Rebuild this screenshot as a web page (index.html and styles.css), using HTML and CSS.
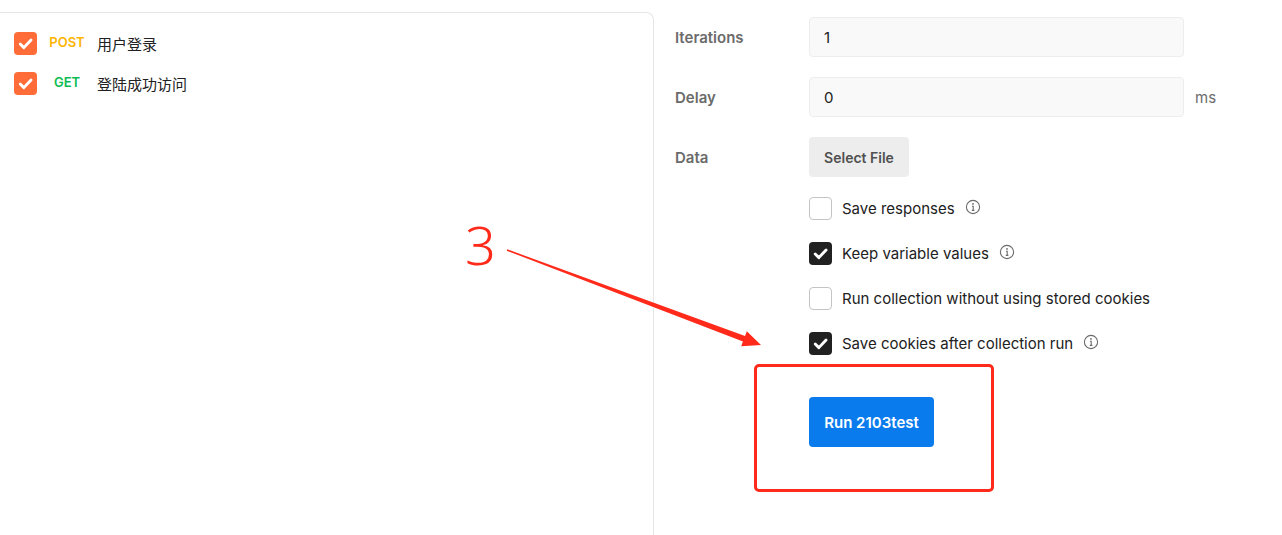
FILE: index.html
```html
<!DOCTYPE html>
<html>
<head>
<meta charset="utf-8">
<link rel="stylesheet" href="styles.css">
</head>
<body>
<div class="page">
  <div class="left">
    <div class="req">
      <span class="cb cb-orange"><svg viewBox="0 0 24 24"><path d="M6.5 12.5l3.8 3.8 7.5-8" /></svg></span>
      <span class="method post">POST</span>
      <span class="name">用户登录</span>
    </div>
    <div class="req">
      <span class="cb cb-orange"><svg viewBox="0 0 24 24"><path d="M6.5 12.5l3.8 3.8 7.5-8" /></svg></span>
      <span class="method get">GET</span>
      <span class="name">登陆成功访问</span>
    </div>
  </div>
  <div class="right">
    <div class="frow">
      <span class="label">Iterations</span>
      <div class="input">1</div>
    </div>
    <div class="frow">
      <span class="label">Delay</span>
      <div class="input">0</div>
      <span class="unit">ms</span>
    </div>
    <div class="frow">
      <span class="label">Data</span>
      <div class="filebtn">Select File</div>
    </div>
    <div class="opts">
      <div class="opt">
        <span class="cb cb-empty"></span>
        <span class="optlabel">Save responses</span>
        <svg class="info" viewBox="0 0 16 16"><circle cx="8" cy="8" r="6.6"/><circle class="dot" cx="8" cy="4.9" r="0.9"/><path d="M7 7.2h1.2v4.2M6.8 11.4h2.6"/></svg>
      </div>
      <div class="opt">
        <span class="cb cb-dark"><svg viewBox="0 0 24 24"><path d="M6.5 12.5l3.8 3.8 7.5-8" /></svg></span>
        <span class="optlabel">Keep variable values</span>
        <svg class="info" viewBox="0 0 16 16"><circle cx="8" cy="8" r="6.6"/><circle class="dot" cx="8" cy="4.9" r="0.9"/><path d="M7 7.2h1.2v4.2M6.8 11.4h2.6"/></svg>
      </div>
      <div class="opt">
        <span class="cb cb-empty"></span>
        <span class="optlabel">Run collection without using stored cookies</span>
      </div>
      <div class="opt">
        <span class="cb cb-dark"><svg viewBox="0 0 24 24"><path d="M6.5 12.5l3.8 3.8 7.5-8" /></svg></span>
        <span class="optlabel">Save cookies after collection run</span>
        <svg class="info" viewBox="0 0 16 16"><circle cx="8" cy="8" r="6.6"/><circle class="dot" cx="8" cy="4.9" r="0.9"/><path d="M7 7.2h1.2v4.2M6.8 11.4h2.6"/></svg>
      </div>
    </div>
    <div class="runrow">
      <div class="runbtn">Run 2103test</div>
    </div>
  </div>
</div>
<div class="annot-num">3</div>
<svg class="annot-arrow" viewBox="0 0 1282 535" width="1282" height="535">
  <polygon points="507.2,249.3 745.05,335.9 746.8,331.2 761,345 741.2,346.2 742.95,341.5 506.8,250.7" />
</svg>
<div class="annot-box"></div>
</body>
</html>
```

FILE: styles.css
```css
* { box-sizing: border-box; }
html, body { margin: 0; padding: 0; background: #fff; }
body {
  font-family: Inter, "Noto Sans", "Noto Sans CJK SC", sans-serif;
  color: #212121;
  width: 1282px;
  height: 535px;
  overflow: hidden;
  position: relative;
}
.page {
  display: flex;
  height: 535px;
}
.left {
  margin-top: 12px;
  width: 654px;
  flex: 0 0 654px;
  border-top: 1px solid #e6e6e6;
  border-right: 1px solid #e6e6e6;
  border-top-right-radius: 8px;
  padding-top: 10px;
}
.req {
  display: flex;
  align-items: center;
  height: 40px;
  padding-left: 14px;
}
.cb {
  width: 23px;
  height: 23px;
  border-radius: 4px;
  flex: 0 0 23px;
  display: inline-flex;
  align-items: center;
  justify-content: center;
}
.cb svg {
  width: 23px;
  height: 23px;
  fill: none;
  stroke: #fff;
  stroke-width: 3;
  stroke-linecap: round;
  stroke-linejoin: round;
}
.cb-orange { background: #ff6c37; }
.cb-dark { background: #212121; }
.cb-empty { border: 1px solid #c4c4c4; background: #fff; }
.method {
  width: 40px;
  margin-left: 10px;
  text-align: center;
  font-size: 13px;
  font-weight: 600;
  margin-top: -2px;
}
.post { color: #ffb400; }
.get { color: #0cbb52; }
.name {
  margin-left: 10px;
  font-family: "Noto Sans CJK SC", sans-serif;
  font-size: 15px;
  color: #212121;
}
.right {
  padding-left: 21px;
  padding-top: 17px;
  display: flex;
  flex-direction: column;
}
.frow {
  display: flex;
  align-items: center;
  height: 40px;
  margin-bottom: 20px;
}
.label {
  width: 134px;
  font-size: 15px;
  font-weight: 600;
  color: #6b6b6b;
}
.input {
  width: 375px;
  height: 40px;
  background: #f9f9f9;
  border: 1px solid #ededed;
  border-radius: 4px;
  padding-left: 14px;
  display: flex;
  align-items: center;
  font-size: 15px;
  color: #212121;
}
.unit {
  margin-left: 11px;
  font-size: 15px;
  color: #6b6b6b;
}
.filebtn {
  width: 100px;
  height: 40px;
  background: #ededed;
  border-radius: 4px;
  display: flex;
  align-items: center;
  justify-content: center;
  font-size: 14px;
  font-weight: 600;
  color: #505050;
}
.opts {
  margin-left: 134px;
  display: flex;
  flex-direction: column;
  gap: 20px;
  margin-top: -1px;
}
.opt {
  display: flex;
  align-items: center;
  height: 25px;
}
.optlabel {
  margin-left: 10px;
  font-size: 15px;
  color: #212121;
}
.info {
  width: 16px;
  height: 16px;
  margin-left: 10px;
  margin-top: -3px;
  fill: none;
  stroke: #6b6b6b;
  stroke-width: 1.1;
}
.info .dot { fill: #6b6b6b; stroke: none; }
.runrow {
  margin-left: 134px;
  margin-top: 41px;
}
.runbtn {
  width: 125px;
  height: 50px;
  background: #097bed;
  border-radius: 4px;
  color: #fff;
  font-size: 15px;
  font-weight: 600;
  display: flex;
  align-items: center;
  justify-content: center;
}
.annot-num {
  position: absolute;
  left: 465px;
  top: 210px;
  font-family: "Noto Sans", sans-serif;
  font-weight: 300;
  font-size: 54px;
  line-height: 68px;
  color: #ff2a1a;
}
.annot-arrow {
  position: absolute;
  left: 0;
  top: 0;
  pointer-events: none;
}
.annot-arrow polygon { fill: #ff2a1a; }
.annot-box {
  position: absolute;
  left: 754px;
  top: 364px;
  width: 240px;
  height: 128px;
  border: 3px solid #ff2a1a;
  border-radius: 5px;
}
```
